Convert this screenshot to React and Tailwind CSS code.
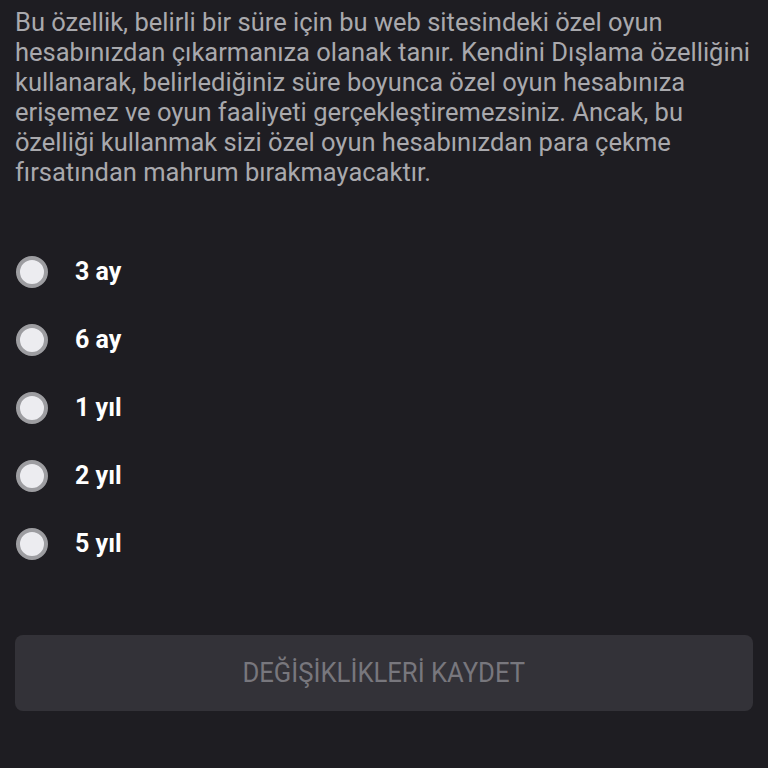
const options = ["3 ay", "6 ay", "1 yıl", "2 yıl", "5 yıl"];

export default function App() {
  return (
    <div className="w-[768px] h-[768px] bg-[#1e1d22] px-[15px] pt-[7px] overflow-hidden" style={{ fontFamily: "Roboto, 'Noto Sans', sans-serif" }}>
      <p className="text-[25.5px] leading-[30px] text-[#a9a9ad] whitespace-nowrap">
        Bu özellik, belirli bir süre için bu web sitesindeki özel oyun<br />
        hesabınızdan çıkarmanıza olanak tanır. Kendini Dışlama özelliğini<br />
        kullanarak, belirlediğiniz süre boyunca özel oyun hesabınıza<br />
        erişemez ve oyun faaliyeti gerçekleştiremezsiniz. Ancak, bu<br />
        özelliği kullanmak sizi özel oyun hesabınızdan para çekme<br />
        fırsatından mahrum bırakmayacaktır.
      </p>
      <div className="mt-[69px] flex flex-col gap-[36px]">
        {options.map((o) => (
          <label key={o} className="flex items-center h-[32px] gap-[27px] pl-px">
            <span className="w-[32px] h-[32px] rounded-full bg-[#ececf0] border-[4px] border-[#9d9da1]" />
            <span className="text-[25px] font-bold text-white">{o}</span>
          </label>
        ))}
      </div>
      <button className="mt-[75px] w-full h-[76px] rounded-lg bg-[#333238] text-[#78777d]">
        <span className="inline-block text-[27px] scale-x-[0.95]">DEĞİŞİKLİKLERİ KAYDET</span>
      </button>
    </div>
  );
}
